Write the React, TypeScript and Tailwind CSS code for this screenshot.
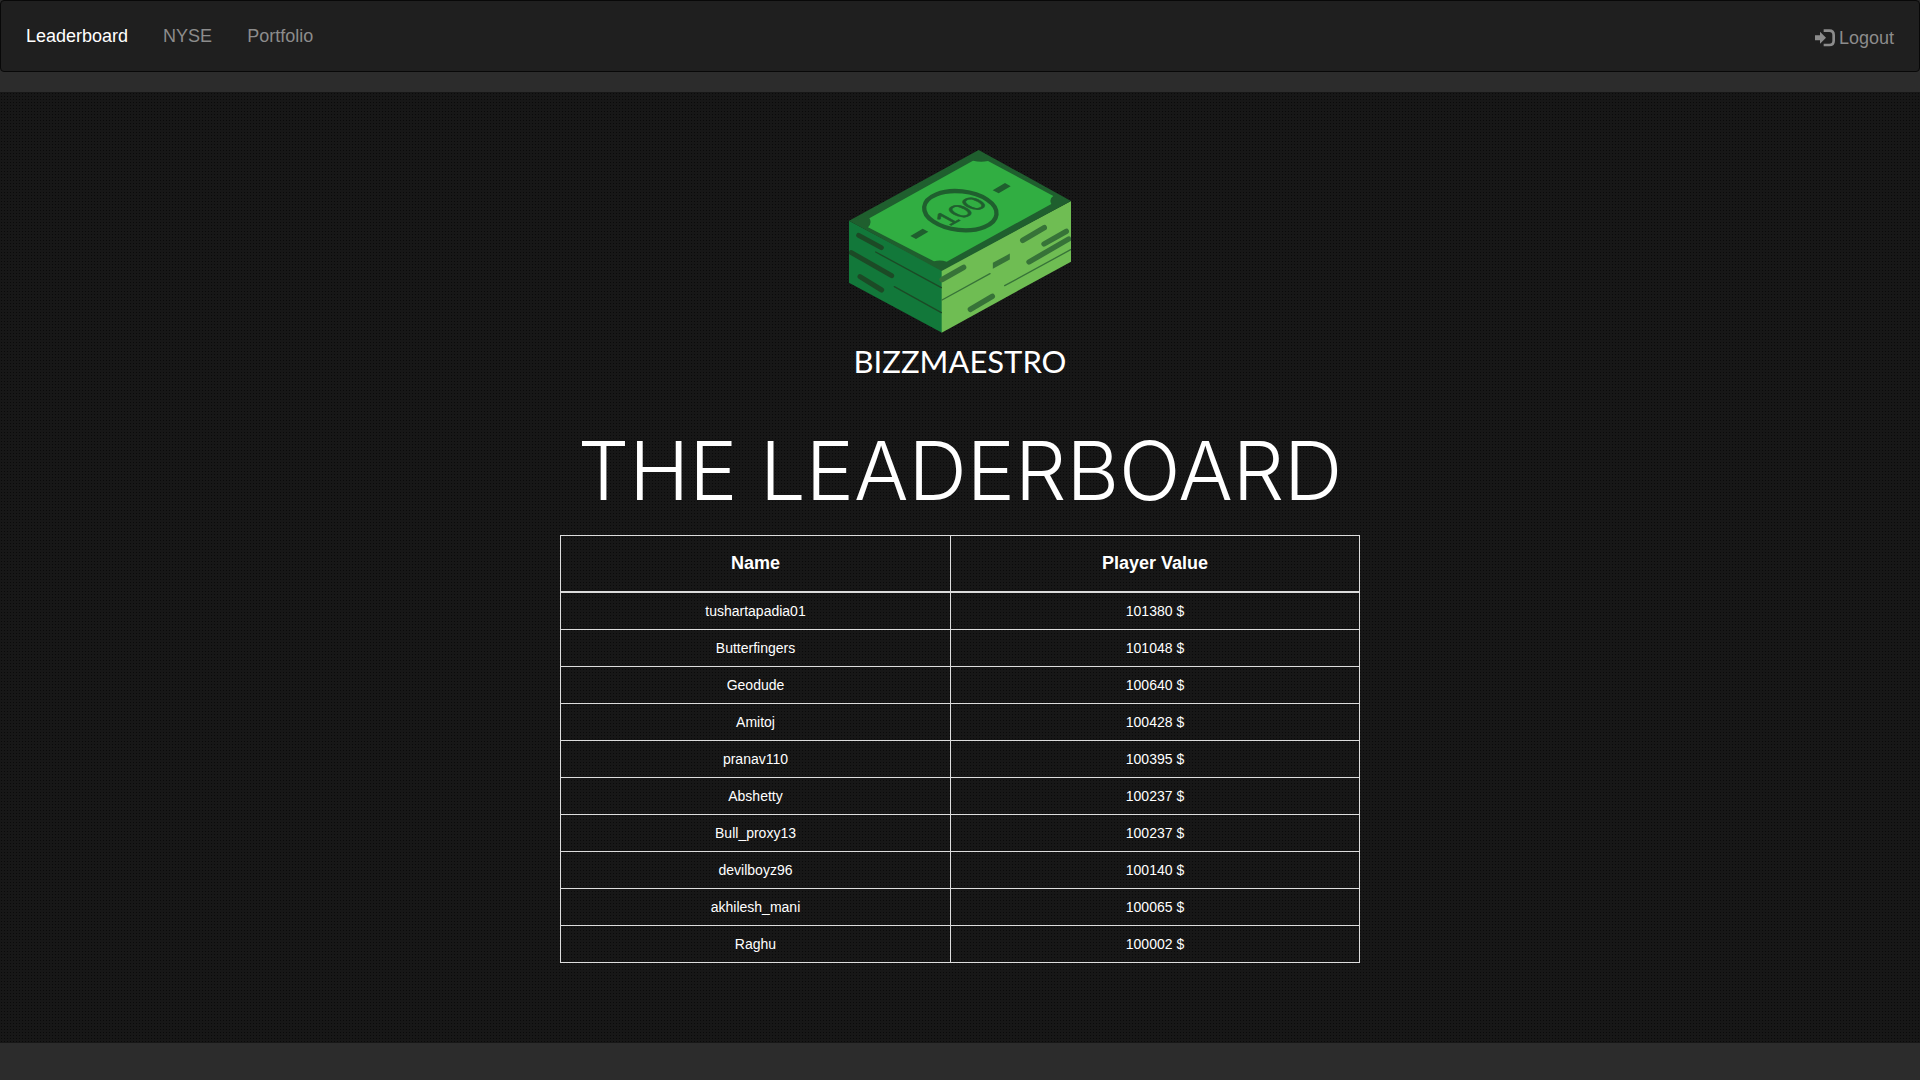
const players = [
  { name: 'tushartapadia01', value: 101380 },
  { name: 'Butterfingers', value: 101048 },
  { name: 'Geodude', value: 100640 },
  { name: 'Amitoj', value: 100428 },
  { name: 'pranav110', value: 100395 },
  { name: 'Abshetty', value: 100237 },
  { name: 'Bull_proxy13', value: 100237 },
  { name: 'devilboyz96', value: 100140 },
  { name: 'akhilesh_mani', value: 100065 },
  { name: 'Raghu', value: 100002 },
];

function LoginIcon() {
  return (
    <svg viewBox="0 0 60 54" className="h-[18px] w-5" aria-hidden="true">
      <path d="M0 19h15V8l18 18-18 18V34H0z" fill="currentColor" />
      <path d="M26 5h17q13 0 13 13v17q0 13-13 13H26" fill="none" stroke="currentColor" strokeWidth="8" />
    </svg>
  );
}

function MoneyStack() {
  return (
    <svg viewBox="57 60 666 549" className="h-[183px] w-[222px]" role="img" aria-label="Stack of banknotes">
      <path d="M57 272 336 420V608L57 458z" fill="#12783a" />
      <path d="M723 213 335 420V608L723 395z" fill="#6fbd53" />
      <path d="M446 60 723 213 335 423 57 272z" fill="#1f5f2e" />
      <path
        d="M429 92Q452 98 474 93L670 198Q656 207 664 222L350 395Q330 388 312 394L114 292Q127 278 118 265z"
        fill="#31ae42"
      />
      <ellipse
        cx="391"
        cy="242"
        rx="109"
        ry="58"
        fill="none"
        stroke="#1f5f2e"
        strokeWidth="13"
        transform="rotate(6 391 242)"
      />
      <path d="M488 181 525 159 542 169 506 190zM241 318 278 296 295 305 258 327z" fill="#1f5f2e" />
      <text
        transform="matrix(.88 -.48 .88 .48 391 244)"
        x="0"
        y="28"
        textAnchor="middle"
        fontSize="80"
        fill="#1f5f2e"
        stroke="#1f5f2e"
        strokeWidth="2"
        className="font-['Lato',sans-serif]"
      >
        100
      </text>
      <g fill="none" stroke="#1c4a26" strokeLinecap="round">
        <path d="M86 316 154 353M90 440 155 480M64 368 185 437" strokeWidth="15" />
        <path d="M137 366 334 473M193 470 334 548" strokeWidth="4" />
      </g>
      <g fill="none" stroke="#377338" strokeLinecap="round">
        <path d="M578 331 643 293M642 342 709 304M597 396 716 327M336 449 401 412M421 538 487 499" strokeWidth="16" />
        <path d="M336 510 480 431M524 467 722 359" strokeWidth="4" />
      </g>
      <path d="M491 400 537 375V387L491 412z" fill="#377338" stroke="#377338" strokeWidth="5" />
    </svg>
  );
}

export default function App() {
  return (
    <div className="min-h-screen bg-[#2c2c2c] font-['Liberation_Sans',Arial,sans-serif] text-white">
      <nav className="mb-5 flex h-18 items-center justify-between rounded border border-[#080808] bg-[#1f1f1f] px-[25px] text-lg text-[#8c8c8c]">
        <ul className="flex gap-[35px]">
          <li>
            <a href="#leaderboard" className="text-white">Leaderboard</a>
          </li>
          <li>
            <a href="#nyse">NYSE</a>
          </li>
          <li>
            <a href="#portfolio">Portfolio</a>
          </li>
        </ul>
        <a href="#logout" className="flex items-center gap-1 pt-1">
          <LoginIcon />
          Logout
        </a>
      </nav>

      <main className="flex flex-col items-center bg-[#171717] bg-[radial-gradient(circle,#0a0a0a_0,transparent_1px)] bg-[length:3px_3px] px-4 pt-[58px] pb-20">
        <MoneyStack />
        <p className="mt-[6px] font-['Lato',sans-serif] text-[31px] leading-[44px]">BIZZMAESTRO</p>
        <h1 className="mt-11 text-center font-['Inter',sans-serif] text-[81px] leading-[88px] font-light">
          THE LEADERBOARD
        </h1>
        <table className="mt-5 w-full max-w-[800px] border-collapse text-center">
          <thead>
            <tr className="h-14 text-lg">
              <th className="w-[390px] border border-b-2 border-[#ddd]">Name</th>
              <th className="border border-b-2 border-[#ddd]">Player Value</th>
            </tr>
          </thead>
          <tbody>
            {players.map((p) => (
              <tr key={p.name} className="text-sm">
                <td className="border border-[#ddd] p-2">{p.name}</td>
                <td className="border border-[#ddd] p-2">{p.value} $</td>
              </tr>
            ))}
          </tbody>
        </table>
      </main>
    </div>
  );
}
